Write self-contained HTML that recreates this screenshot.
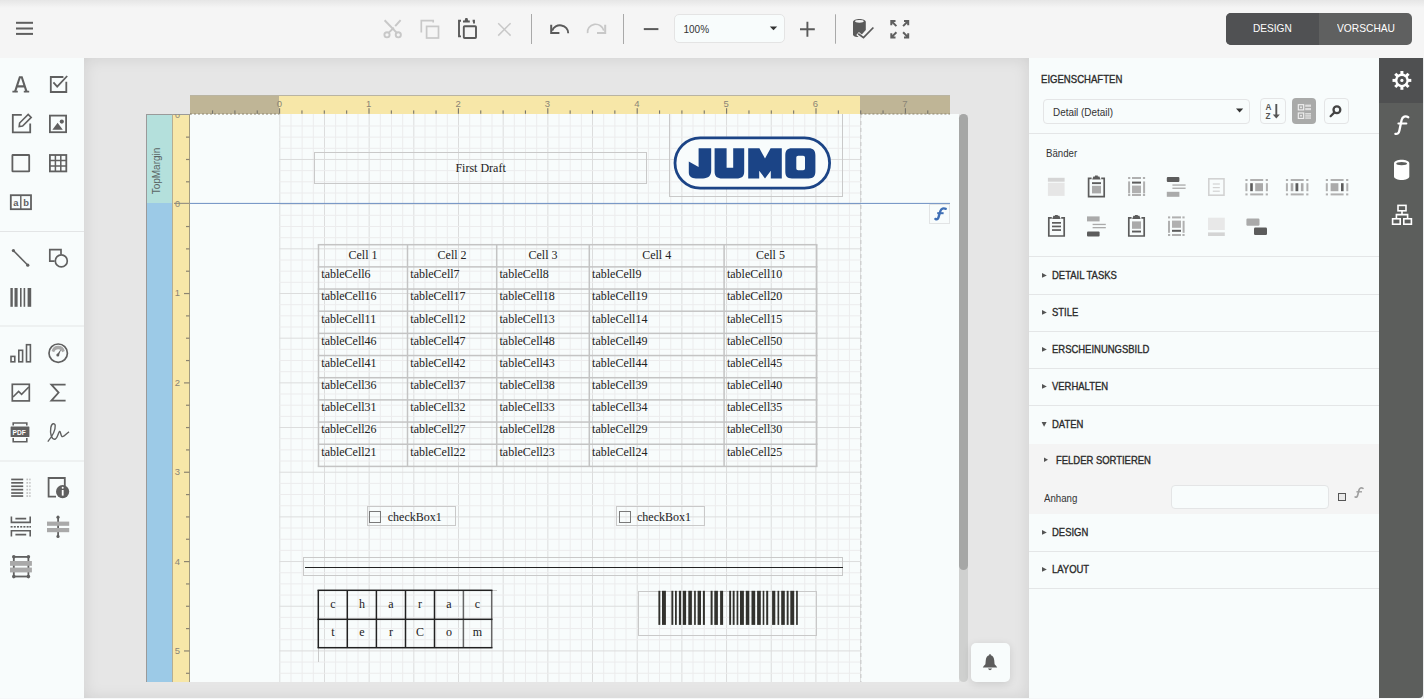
<!DOCTYPE html><html><head><meta charset="utf-8"><style>
*{margin:0;padding:0;box-sizing:border-box}
html,body{width:1424px;height:699px;overflow:hidden;background:#f5f5f5;font-family:"Liberation Sans",sans-serif}
.a{position:absolute}
.t{position:absolute;white-space:nowrap;line-height:1}
.serif{font-family:"Liberation Serif",serif}
</style></head><body>

<div class="a" style="left:0;top:0;width:1424px;height:58px;background:#f5f5f5"></div>
<div class="a" style="left:0;top:0;width:1424px;height:8px;background:linear-gradient(#e6e6e6,#f5f5f5)"></div>
<svg class="a" style="left:0;top:0" width="1424" height="58" viewBox="0 0 1424 58">
<g fill="#5f5f5f"><rect x="16" y="21.8" width="17" height="2"/><rect x="16" y="27.5" width="17" height="2"/><rect x="16" y="32.9" width="17" height="2"/></g>
<g fill="none" stroke="#c8c8c8" stroke-width="1.7">
 <circle cx="387" cy="34.8" r="2.6" stroke-width="1.9"/><circle cx="398.3" cy="34.8" r="2.6" stroke-width="1.9"/>
 <path d="M384.6,20.2 L396.6,32.6" stroke-width="2"/><path d="M400.6,20.2 L395.2,26.2 M393.8,27.8 L388.8,32.6" stroke-width="2"/>
 <path d="M421.3,32.4 V20.6 H433.2 V22.4"/><rect x="426.6" y="26.4" width="11.9" height="11.6"/>
 <path d="M498.2,23.2 L510.6,35.6 M510.6,23.2 L498.2,35.6" stroke-width="1.5"/>
 <path d="M587.6,33.2 A8.2,7.6 0 0 1 603.8,30.6" /><path d="M605.2,24.8 V33.1 H597" stroke-width="2"/>
</g>
<g fill="none" stroke="#5a5a5a" stroke-width="1.9">
 <path d="M461,20.8 H459 V36.4 H461"/><path d="M472.6,20.8 H474 V23.6"/>
 <rect x="463.8" y="26.2" width="12.2" height="11.8" rx="0.8"/>
 <path d="M568.2,33.2 A8.2,7.6 0 0 0 552.2,30.6"/><path d="M551.2,24.8 V33.1 H559.4" stroke-width="2"/>
 <path d="M643.8,29.1 H658.4" stroke-width="2"/>
 <path d="M800,29.2 H814.8 M807.4,21.8 V36.7" stroke-width="1.9"/>
</g>
<path fill="#5a5a5a" d="M463,22.6 V20.4 H464.6 L465.4,18.1 H467.4 L468.2,20.4 H469.8 V22.6 Z"/>
<g fill="#a9a9a9"><rect x="531" y="14" width="1" height="30"/><rect x="623" y="14" width="1" height="30"/><rect x="835" y="14.3" width="1" height="29.4"/></g>
<path fill="#5a5a5a" d="M853,22 C853,18 865.8,18 865.8,22 V30 L860,36.4 C857,37.6 853,36.8 853,34.5 Z"/>
<ellipse cx="859.4" cy="21.3" rx="4.4" ry="1.4" fill="#f4f4f4"/>
<path d="M857.6,33.4 L863.4,38.4 L874,27.6" fill="none" stroke="#f4f4f4" stroke-width="4"/>
<path d="M858.2,33.7 L863.5,37.6 L873.4,27.5" fill="none" stroke="#5a5a5a" stroke-width="1.7"/>
<g fill="none" stroke="#5f5f5f" stroke-width="2">
 <path d="M891.3,25.2 V21 H895.5 M891.6,21.3 L896.4,26.1"/>
 <path d="M908.2,25.2 V21 H904 M907.9,21.3 L903.1,26.1"/>
 <path d="M891.3,33.2 V37.4 H895.5 M891.6,37.1 L896.4,32.3"/>
 <path d="M908.2,33.2 V37.4 H904 M907.9,37.1 L903.1,32.3"/>
</g>
<path d="M769.8,26.4 H777.2 L773.5,30.3 Z" fill="#333"/>
</svg>
<div class="a" style="left:674px;top:14px;width:111px;height:29px;border:1px solid #e4e4e4;border-radius:5px;background:#f8fcfc"></div>
<svg class="a" style="left:0;top:0" width="1424" height="58"><path d="M769.8,26.4 H777.2 L773.5,30.3 Z" fill="#333"/></svg>
<div class="t" style="left:683.5px;top:24.6px;font-size:10px;color:#333">100%</div>
<div class="a" style="left:1226px;top:13px;width:186px;height:32px;border-radius:5px;overflow:hidden;background:#5f6060"><div class="a" style="left:0;top:0;width:93px;height:32px;background:#505153"></div></div>
<div class="t" style="left:1253px;top:23px;font-size:11px;color:#fff;transform:scaleX(0.92);transform-origin:left">DESIGN</div>
<div class="t" style="left:1336.5px;top:23px;font-size:11px;color:#fff;transform:scaleX(0.93);transform-origin:left">VORSCHAU</div>
<div class="a" style="left:0;top:58px;width:84px;height:641px;background:#f8fcfc"></div>
<svg class="a" style="left:0;top:0" width="84" height="699" viewBox="0 0 84 699">
<g fill="#e3e5e6"><rect x="0" y="231" width="84" height="1"/><rect x="0" y="325.5" width="84" height="1"/><rect x="0" y="460.5" width="84" height="1"/></g>
<g fill="none" stroke="#606060" stroke-width="1.8">
 <!-- A serif -->
 <path d="M15,91.8 L19.8,77.2 H21.8 L26.6,91.8 M16.8,86.4 H24.8" stroke-width="2.1"/>
 <path d="M12.4,91.6 H17.8 M23.8,91.6 H29.2" stroke-width="1.8"/>
 <!-- checkbox -->
 <path d="M63.4,77 H50.8 V92 H66.3 V81.8"/>
 <path d="M53.4,82.4 L57.2,86.6 L67.2,76" />
 <!-- edit -->
 <path d="M21.8,114.8 H12.8 V132.4 H30.2 V123.4"/>
 <path d="M19.2,126.6 L19.6,123 L28.2,114.4 L31.2,117.4 L22.6,126 Z" stroke-width="1.6"/>
 <!-- image -->
 <rect x="49.9" y="115.6" width="16.2" height="16.6"/>
 <!-- rect -->
 <rect x="12.4" y="155" width="16.8" height="16.4" rx="0.5"/>
 <!-- table -->
 <rect x="49.9" y="155" width="16.4" height="16.4"/>
 <path d="M55.4,155 V171.4 M60.8,155 V171.4 M49.9,160.5 H66.3 M49.9,165.9 H66.3" stroke-width="1.5"/>
 <!-- ab -->
 <rect x="10.8" y="195.2" width="20.2" height="14"/><path d="M20.8,195.2 V209.2" stroke-width="1.4"/>
 <!-- line -->
 <path d="M13.6,250.8 L27.6,265" stroke-width="1.6"/>
 <!-- shape -->
 <path d="M54.6,261.2 H49.8 V249.6 H61 V254.4" stroke-width="1.7"/>
 <circle cx="61.3" cy="260.9" r="6" stroke-width="1.7"/>
 <!-- chart bars -->
 <rect x="11" y="356.4" width="3.8" height="5.4" stroke-width="1.6"/>
 <rect x="18.8" y="350.3" width="3.8" height="11.5" stroke-width="1.6"/>
 <rect x="26.5" y="344.7" width="3.9" height="17.1" stroke-width="1.6"/>
 <!-- gauge -->
 <circle cx="58.2" cy="353.2" r="9.2" stroke-width="1.7"/>
 <!-- line chart -->
 <rect x="12.3" y="384.3" width="17" height="16.6" stroke-width="1.7"/>
 <path d="M13,397 L18.6,391.4 L21.6,394.4 L28.8,387" stroke-width="1.6"/>
 <!-- sigma -->
 <path d="M65.6,384.6 H51.4 L58.6,392.6 L51.4,400.6 H65.6" stroke-width="1.8"/>
 <!-- signature -->
 <path d="M47.8,441.6 C51.6,437 55.6,431 55.2,425.6 C54.8,422.6 51.6,423 50.8,427.6 C50,432.8 51.2,439 54.4,439.2 C57.6,439.4 58.2,432 59.6,431.4 C60.8,431 60.6,437 62.6,436.6 C64.6,436.2 66.6,433.4 69,431.8" stroke-width="1.4"/>
 <!-- info page -->
 <path d="M56,496.6 H48.6 V478 H64.8 V486" stroke-width="1.8"/>
 <!-- page break -->
 <path d="M11.4,516.6 V522.4 H30.2 V516.6 M15.4,518.6 H26.2" stroke-width="1.6"/>
 <path d="M11.4,536.6 V530.8 H30.2 V536.6 M15.4,534.6 H26.2" stroke-width="1.6"/>
</g>
<g fill="#606060">
 <circle cx="13.4" cy="250.6" r="1.6"/><circle cx="27.8" cy="265.2" r="1.6"/>
 <circle cx="61.8" cy="121.6" r="2.1"/>
 <path d="M52.4,129.8 L57.6,122.8 L62.8,129.8 Z"/>
 <path d="M22.6,113.6 L24.6,111.6 L27.2,114.2 L25.2,116.2 Z" fill="none"/>
 <rect x="10.4" y="288" width="2.4" height="18.8"/><rect x="14.5" y="288" width="3.1" height="18.8"/><rect x="20" y="288" width="1.6" height="18.8"/><rect x="23.6" y="288" width="1.6" height="18.8"/><rect x="27.6" y="288" width="3.6" height="18.8"/>
 <path d="M12.4,192 Z"/>
 <!-- pdf -->
 <rect x="10.6" y="426.6" width="18.8" height="10.4" rx="0.5"/>
 <path d="M12.4,425.6 V422.2 H27.6 V425.6 H26 V423.8 H14 V425.6 Z M12.4,438 V442.6 H27.6 V438 H26 V441 H14 V438 Z"/>
 <!-- gauge needle -->
 <path d="M57,354.6 L61.6,348.2 L58.8,355.6 Z"/>
 <circle cx="57.8" cy="355" r="1.5"/>
 <!-- toc -->
 <rect x="11.2" y="478.6" width="12" height="1.7"/><rect x="11.2" y="482" width="12" height="1.7"/><rect x="11.2" y="485.4" width="12" height="1.7"/><rect x="11.2" y="488.8" width="12" height="1.7"/><rect x="11.2" y="492.2" width="12" height="1.7"/><rect x="11.2" y="495.2" width="12" height="1.7"/>
 <!-- info circle -->
 <circle cx="62.6" cy="491.6" r="6.6"/>
 <!-- page break dots -->
 <rect x="10.6" y="526" width="2" height="1.6"/><rect x="13.8" y="526" width="2" height="1.6"/><rect x="17" y="526" width="2" height="1.6"/><rect x="20.2" y="526" width="2" height="1.6"/><rect x="23.4" y="526" width="2" height="1.6"/><rect x="26.6" y="526" width="2" height="1.6"/><rect x="29.4" y="526" width="1.6" height="1.6"/>
 <!-- cross band vertical -->
 <rect x="57.2" y="516" width="1.8" height="21"/><circle cx="58" cy="517.2" r="1.6"/><circle cx="58" cy="536.4" r="1.6"/>
 <!-- crosstab -->
 <rect x="13.6" y="556" width="15" height="1.8"/><rect x="13.6" y="575.6" width="15" height="1.8"/>
 <rect x="12.9" y="556" width="1.8" height="21"/><rect x="27.5" y="556" width="1.8" height="21"/>
 <circle cx="13.8" cy="556.8" r="1.8"/><circle cx="28.4" cy="556.8" r="1.8"/><circle cx="13.8" cy="576.6" r="1.8"/><circle cx="28.4" cy="576.6" r="1.8"/>
</g>
<g fill="#a9a9a9">
 <path d="M51.6,351 A6.8,6.8 0 0 1 64.8,351 L62.2,352.2 A4.2,4.2 0 0 0 54.2,352.2 Z"/>
 <rect x="47" y="521.6" width="22.2" height="4.2"/><rect x="47" y="528" width="22.2" height="4.2"/>
 <rect x="10" y="561" width="21.9" height="4.8"/><rect x="10" y="567.6" width="21.9" height="4.8"/>
</g>
<g fill="#c0c0c0">
 <rect x="26.4" y="478.6" width="1.7" height="1.7"/><rect x="29.2" y="478.6" width="1.4" height="1.7"/>
 <rect x="26.4" y="482" width="1.7" height="1.7"/><rect x="29.2" y="482" width="1.4" height="1.7"/>
 <rect x="26.4" y="485.4" width="1.7" height="1.7"/><rect x="29.2" y="485.4" width="1.4" height="1.7"/>
 <rect x="26.4" y="488.8" width="1.7" height="1.7"/><rect x="29.2" y="488.8" width="1.4" height="1.7"/>
 <rect x="26.4" y="492.2" width="1.7" height="1.7"/><rect x="29.2" y="492.2" width="1.4" height="1.7"/>
 <rect x="26.4" y="495.2" width="1.7" height="1.7"/><rect x="29.2" y="495.2" width="1.4" height="1.7"/>
</g>
<g fill="#fff"><rect x="61.8" y="490" width="1.8" height="5.6"/><circle cx="62.7" cy="487.8" r="1"/></g>
<text x="15.8" y="205.8" font-family="Liberation Sans" font-weight="bold" font-size="9.4" fill="#606060" text-anchor="middle">a</text>
<text x="26" y="205.8" font-family="Liberation Sans" font-weight="bold" font-size="9.4" fill="#606060" text-anchor="middle">b</text>
<text x="12.6" y="435.2" font-family="Liberation Sans" font-weight="bold" font-size="6.6" fill="#fff">PDF</text>
</svg>
<div class="a" style="left:84px;top:58px;width:945px;height:641px;background:#e6e6e6;overflow:hidden">
<div class="a" style="left:0;top:0;width:945px;height:641px;box-shadow:inset 0 0 16px rgba(0,0,0,0.10)"></div>
</div>
<div class="a" style="left:190px;top:114px;width:769px;height:568px;background:#f8fcfc"></div>
<svg class="a" style="left:0;top:0" width="1424" height="699" viewBox="0 0 1424 699"><rect x="279.30" y="114" width="1" height="568.0" fill="#dcdddd"/><rect x="290.47" y="114" width="1" height="568.0" fill="#ececed"/><rect x="301.64" y="114" width="1" height="568.0" fill="#ececed"/><rect x="312.81" y="114" width="1" height="568.0" fill="#ececed"/><rect x="323.98" y="114" width="1" height="568.0" fill="#dcdddd"/><rect x="335.14" y="114" width="1" height="568.0" fill="#ececed"/><rect x="346.31" y="114" width="1" height="568.0" fill="#ececed"/><rect x="357.48" y="114" width="1" height="568.0" fill="#ececed"/><rect x="368.65" y="114" width="1" height="568.0" fill="#dcdddd"/><rect x="379.82" y="114" width="1" height="568.0" fill="#ececed"/><rect x="390.99" y="114" width="1" height="568.0" fill="#ececed"/><rect x="402.16" y="114" width="1" height="568.0" fill="#ececed"/><rect x="413.32" y="114" width="1" height="568.0" fill="#dcdddd"/><rect x="424.49" y="114" width="1" height="568.0" fill="#ececed"/><rect x="435.66" y="114" width="1" height="568.0" fill="#ececed"/><rect x="446.83" y="114" width="1" height="568.0" fill="#ececed"/><rect x="458.00" y="114" width="1" height="568.0" fill="#dcdddd"/><rect x="469.17" y="114" width="1" height="568.0" fill="#ececed"/><rect x="480.34" y="114" width="1" height="568.0" fill="#ececed"/><rect x="491.51" y="114" width="1" height="568.0" fill="#ececed"/><rect x="502.68" y="114" width="1" height="568.0" fill="#dcdddd"/><rect x="513.84" y="114" width="1" height="568.0" fill="#ececed"/><rect x="525.01" y="114" width="1" height="568.0" fill="#ececed"/><rect x="536.18" y="114" width="1" height="568.0" fill="#ececed"/><rect x="547.35" y="114" width="1" height="568.0" fill="#dcdddd"/><rect x="558.52" y="114" width="1" height="568.0" fill="#ececed"/><rect x="569.69" y="114" width="1" height="568.0" fill="#ececed"/><rect x="580.86" y="114" width="1" height="568.0" fill="#ececed"/><rect x="592.02" y="114" width="1" height="568.0" fill="#dcdddd"/><rect x="603.19" y="114" width="1" height="568.0" fill="#ececed"/><rect x="614.36" y="114" width="1" height="568.0" fill="#ececed"/><rect x="625.53" y="114" width="1" height="568.0" fill="#ececed"/><rect x="636.70" y="114" width="1" height="568.0" fill="#dcdddd"/><rect x="647.87" y="114" width="1" height="568.0" fill="#ececed"/><rect x="659.04" y="114" width="1" height="568.0" fill="#ececed"/><rect x="670.21" y="114" width="1" height="568.0" fill="#ececed"/><rect x="681.38" y="114" width="1" height="568.0" fill="#dcdddd"/><rect x="692.54" y="114" width="1" height="568.0" fill="#ececed"/><rect x="703.71" y="114" width="1" height="568.0" fill="#ececed"/><rect x="714.88" y="114" width="1" height="568.0" fill="#ececed"/><rect x="726.05" y="114" width="1" height="568.0" fill="#dcdddd"/><rect x="737.22" y="114" width="1" height="568.0" fill="#ececed"/><rect x="748.39" y="114" width="1" height="568.0" fill="#ececed"/><rect x="759.56" y="114" width="1" height="568.0" fill="#ececed"/><rect x="770.72" y="114" width="1" height="568.0" fill="#dcdddd"/><rect x="781.89" y="114" width="1" height="568.0" fill="#ececed"/><rect x="793.06" y="114" width="1" height="568.0" fill="#ececed"/><rect x="804.23" y="114" width="1" height="568.0" fill="#ececed"/><rect x="815.40" y="114" width="1" height="568.0" fill="#dcdddd"/><rect x="826.57" y="114" width="1" height="568.0" fill="#ececed"/><rect x="837.74" y="114" width="1" height="568.0" fill="#ececed"/><rect x="848.91" y="114" width="1" height="568.0" fill="#ececed"/><rect x="860.08" y="114" width="1" height="568.0" fill="#dcdddd"/><rect x="279.30" y="125.47" width="581.1" height="1" fill="#ececed"/><rect x="279.30" y="136.64" width="581.1" height="1" fill="#ececed"/><rect x="279.30" y="147.81" width="581.1" height="1" fill="#ececed"/><rect x="279.30" y="158.97" width="581.1" height="1" fill="#dcdddd"/><rect x="279.30" y="170.14" width="581.1" height="1" fill="#ececed"/><rect x="279.30" y="181.31" width="581.1" height="1" fill="#ececed"/><rect x="279.30" y="192.48" width="581.1" height="1" fill="#ececed"/><rect x="279.30" y="203.65" width="581.1" height="1" fill="#dcdddd"/><rect x="279.30" y="214.82" width="581.1" height="1" fill="#ececed"/><rect x="279.30" y="225.99" width="581.1" height="1" fill="#ececed"/><rect x="279.30" y="237.16" width="581.1" height="1" fill="#ececed"/><rect x="279.30" y="248.32" width="581.1" height="1" fill="#dcdddd"/><rect x="279.30" y="259.49" width="581.1" height="1" fill="#ececed"/><rect x="279.30" y="270.66" width="581.1" height="1" fill="#ececed"/><rect x="279.30" y="281.83" width="581.1" height="1" fill="#ececed"/><rect x="279.30" y="293.00" width="581.1" height="1" fill="#dcdddd"/><rect x="279.30" y="304.17" width="581.1" height="1" fill="#ececed"/><rect x="279.30" y="315.34" width="581.1" height="1" fill="#ececed"/><rect x="279.30" y="326.51" width="581.1" height="1" fill="#ececed"/><rect x="279.30" y="337.68" width="581.1" height="1" fill="#dcdddd"/><rect x="279.30" y="348.84" width="581.1" height="1" fill="#ececed"/><rect x="279.30" y="360.01" width="581.1" height="1" fill="#ececed"/><rect x="279.30" y="371.18" width="581.1" height="1" fill="#ececed"/><rect x="279.30" y="382.35" width="581.1" height="1" fill="#dcdddd"/><rect x="279.30" y="393.52" width="581.1" height="1" fill="#ececed"/><rect x="279.30" y="404.69" width="581.1" height="1" fill="#ececed"/><rect x="279.30" y="415.86" width="581.1" height="1" fill="#ececed"/><rect x="279.30" y="427.02" width="581.1" height="1" fill="#dcdddd"/><rect x="279.30" y="438.19" width="581.1" height="1" fill="#ececed"/><rect x="279.30" y="449.36" width="581.1" height="1" fill="#ececed"/><rect x="279.30" y="460.53" width="581.1" height="1" fill="#ececed"/><rect x="279.30" y="471.70" width="581.1" height="1" fill="#dcdddd"/><rect x="279.30" y="482.87" width="581.1" height="1" fill="#ececed"/><rect x="279.30" y="494.04" width="581.1" height="1" fill="#ececed"/><rect x="279.30" y="505.21" width="581.1" height="1" fill="#ececed"/><rect x="279.30" y="516.38" width="581.1" height="1" fill="#dcdddd"/><rect x="279.30" y="527.54" width="581.1" height="1" fill="#ececed"/><rect x="279.30" y="538.71" width="581.1" height="1" fill="#ececed"/><rect x="279.30" y="549.88" width="581.1" height="1" fill="#ececed"/><rect x="279.30" y="561.05" width="581.1" height="1" fill="#dcdddd"/><rect x="279.30" y="572.22" width="581.1" height="1" fill="#ececed"/><rect x="279.30" y="583.39" width="581.1" height="1" fill="#ececed"/><rect x="279.30" y="594.56" width="581.1" height="1" fill="#ececed"/><rect x="279.30" y="605.72" width="581.1" height="1" fill="#dcdddd"/><rect x="279.30" y="616.89" width="581.1" height="1" fill="#ececed"/><rect x="279.30" y="628.06" width="581.1" height="1" fill="#ececed"/><rect x="279.30" y="639.23" width="581.1" height="1" fill="#ececed"/><rect x="279.30" y="650.40" width="581.1" height="1" fill="#dcdddd"/><rect x="279.30" y="661.57" width="581.1" height="1" fill="#ececed"/><rect x="279.30" y="672.74" width="581.1" height="1" fill="#ececed"/>
<line x1="860.9" y1="114" x2="860.9" y2="682" stroke="#c8c8c8" stroke-width="1" stroke-dasharray="4,3"/>
<rect x="190" y="202.9" width="760" height="1" fill="#6d8fc2"/>
</svg>
<div class="a" style="left:190px;top:95px;width:760px;height:19px;background:#bfb596;border-top:1px solid #b9b4a2"></div>
<div class="a" style="left:279.4px;top:96px;width:581px;height:18px;background:#f7e7a8"></div>
<svg class="a" style="left:0;top:0" width="1424" height="699" viewBox="0 0 1424 699"><rect x="212.00" y="110.4" width="1.1" height="3.4" fill="#77756c"/><rect x="234.35" y="110.4" width="1.1" height="3.4" fill="#77756c"/><rect x="256.70" y="110.4" width="1.1" height="3.4" fill="#77756c"/><rect x="279.05" y="108.2" width="1.1" height="5.6" fill="#77756c"/><rect x="301.40" y="110.4" width="1.1" height="3.4" fill="#77756c"/><rect x="323.75" y="110.4" width="1.1" height="3.4" fill="#77756c"/><rect x="346.10" y="110.4" width="1.1" height="3.4" fill="#77756c"/><rect x="368.45" y="108.2" width="1.1" height="5.6" fill="#77756c"/><rect x="390.80" y="110.4" width="1.1" height="3.4" fill="#77756c"/><rect x="413.15" y="110.4" width="1.1" height="3.4" fill="#77756c"/><rect x="435.50" y="110.4" width="1.1" height="3.4" fill="#77756c"/><rect x="457.85" y="108.2" width="1.1" height="5.6" fill="#77756c"/><rect x="480.20" y="110.4" width="1.1" height="3.4" fill="#77756c"/><rect x="502.55" y="110.4" width="1.1" height="3.4" fill="#77756c"/><rect x="524.90" y="110.4" width="1.1" height="3.4" fill="#77756c"/><rect x="547.25" y="108.2" width="1.1" height="5.6" fill="#77756c"/><rect x="569.60" y="110.4" width="1.1" height="3.4" fill="#77756c"/><rect x="591.95" y="110.4" width="1.1" height="3.4" fill="#77756c"/><rect x="614.30" y="110.4" width="1.1" height="3.4" fill="#77756c"/><rect x="636.65" y="108.2" width="1.1" height="5.6" fill="#77756c"/><rect x="659.00" y="110.4" width="1.1" height="3.4" fill="#77756c"/><rect x="681.35" y="110.4" width="1.1" height="3.4" fill="#77756c"/><rect x="703.70" y="110.4" width="1.1" height="3.4" fill="#77756c"/><rect x="726.05" y="108.2" width="1.1" height="5.6" fill="#77756c"/><rect x="748.40" y="110.4" width="1.1" height="3.4" fill="#77756c"/><rect x="770.75" y="110.4" width="1.1" height="3.4" fill="#77756c"/><rect x="793.10" y="110.4" width="1.1" height="3.4" fill="#77756c"/><rect x="815.45" y="108.2" width="1.1" height="5.6" fill="#77756c"/><rect x="837.80" y="110.4" width="1.1" height="3.4" fill="#77756c"/><rect x="860.15" y="110.4" width="1.1" height="3.4" fill="#77756c"/><rect x="882.50" y="110.4" width="1.1" height="3.4" fill="#77756c"/><rect x="904.85" y="108.2" width="1.1" height="5.6" fill="#77756c"/><rect x="927.20" y="110.4" width="1.1" height="3.4" fill="#77756c"/>
<line x1="190" y1="114" x2="279.4" y2="114" stroke="#8d8570" stroke-width="1.2" stroke-dasharray="2,2"/>
<line x1="860.4" y1="114" x2="950" y2="114" stroke="#8d8570" stroke-width="1.2" stroke-dasharray="2,2"/>
<rect x="190" y="113.4" width="0.8" height="1" fill="#8d8570"/>
<text x="279.40" y="107.4" font-family="Liberation Sans" font-size="9.5" fill="#8a8576" text-anchor="middle">0</text>
<text x="368.75" y="107.4" font-family="Liberation Sans" font-size="9.5" fill="#8a8576" text-anchor="middle">1</text>
<text x="458.10" y="107.4" font-family="Liberation Sans" font-size="9.5" fill="#8a8576" text-anchor="middle">2</text>
<text x="547.45" y="107.4" font-family="Liberation Sans" font-size="9.5" fill="#8a8576" text-anchor="middle">3</text>
<text x="636.80" y="107.4" font-family="Liberation Sans" font-size="9.5" fill="#8a8576" text-anchor="middle">4</text>
<text x="726.15" y="107.4" font-family="Liberation Sans" font-size="9.5" fill="#8a8576" text-anchor="middle">5</text>
<text x="815.50" y="107.4" font-family="Liberation Sans" font-size="9.5" fill="#8a8576" text-anchor="middle">6</text>
<text x="904.85" y="107.4" font-family="Liberation Sans" font-size="9.5" fill="#8a8576" text-anchor="middle">7</text>
</svg>
<div class="a" style="left:146px;top:114px;width:25.5px;height:89.4px;background:#b4e0dc;border-left:1px solid #9a9a9a;border-top:1px solid #9a9a9a"></div>
<div class="a" style="left:146px;top:203.4px;width:25.5px;height:278.6px;background:#9ccae7;border-left:1px solid #9a9a9a"></div>
<div class="a" style="left:146px;top:482px;width:25.5px;height:200px;background:#9ccae7;border-left:1px solid #9a9a9a"></div>
<div class="t" style="left:157.3px;top:171.4px;font-size:10px;color:#5a6464;transform:translate(-50%,-50%) rotate(-90deg)">TopMargin</div>
<div class="a" style="left:171.5px;top:114px;width:18.5px;height:568px;background:#f7e7a8;border-top:1px solid #9a9a9a;border-right:1.2px solid #a39c80;border-left:1px solid #b5ae92"></div>
<svg class="a" style="left:0;top:0" width="1424" height="699" viewBox="0 0 1424 699"><rect x="186" y="136.54" width="3.6" height="1.2" fill="#8d8570"/><rect x="186" y="158.88" width="3.6" height="1.2" fill="#8d8570"/><rect x="186" y="181.21" width="3.6" height="1.2" fill="#8d8570"/><rect x="186" y="225.94" width="3.6" height="1.2" fill="#8d8570"/><rect x="186" y="248.28" width="3.6" height="1.2" fill="#8d8570"/><rect x="186" y="270.61" width="3.6" height="1.2" fill="#8d8570"/><rect x="184" y="292.95" width="5.6" height="1.2" fill="#8d8570"/><rect x="186" y="315.29" width="3.6" height="1.2" fill="#8d8570"/><rect x="186" y="337.62" width="3.6" height="1.2" fill="#8d8570"/><rect x="186" y="359.96" width="3.6" height="1.2" fill="#8d8570"/><rect x="184" y="382.30" width="5.6" height="1.2" fill="#8d8570"/><rect x="186" y="404.64" width="3.6" height="1.2" fill="#8d8570"/><rect x="186" y="426.97" width="3.6" height="1.2" fill="#8d8570"/><rect x="186" y="449.31" width="3.6" height="1.2" fill="#8d8570"/><rect x="184" y="471.65" width="5.6" height="1.2" fill="#8d8570"/><rect x="186" y="493.99" width="3.6" height="1.2" fill="#8d8570"/><rect x="186" y="516.32" width="3.6" height="1.2" fill="#8d8570"/><rect x="186" y="538.66" width="3.6" height="1.2" fill="#8d8570"/><rect x="184" y="561.00" width="5.6" height="1.2" fill="#8d8570"/><rect x="186" y="583.34" width="3.6" height="1.2" fill="#8d8570"/><rect x="186" y="605.67" width="3.6" height="1.2" fill="#8d8570"/><rect x="186" y="628.01" width="3.6" height="1.2" fill="#8d8570"/><rect x="184" y="650.35" width="5.6" height="1.2" fill="#8d8570"/><rect x="186" y="672.69" width="3.6" height="1.2" fill="#8d8570"/>
<clipPath id="vr0"><rect x="172" y="114.6" width="17" height="10"/></clipPath><text x="177.4" y="117.8" font-family="Liberation Sans" font-size="9" fill="#8a8576" text-anchor="middle" clip-path="url(#vr0)">0</text>
<rect x="174" y="202.8" width="15.5" height="1.2" fill="#9a9484"/>
<text x="177.4" y="207" font-family="Liberation Sans" font-size="9" fill="#8a8576" text-anchor="middle">0</text>
<text x="177.4" y="296.45" font-family="Liberation Sans" font-size="9.5" fill="#8a8576" text-anchor="middle">1</text>
<text x="177.4" y="385.80" font-family="Liberation Sans" font-size="9.5" fill="#8a8576" text-anchor="middle">2</text>
<text x="177.4" y="475.15" font-family="Liberation Sans" font-size="9.5" fill="#8a8576" text-anchor="middle">3</text>
<text x="177.4" y="564.50" font-family="Liberation Sans" font-size="9.5" fill="#8a8576" text-anchor="middle">4</text>
<text x="177.4" y="653.85" font-family="Liberation Sans" font-size="9.5" fill="#8a8576" text-anchor="middle">5</text>
</svg>
<div class="a" style="left:959.2px;top:114px;width:9px;height:568px;background:#cfd0cf;border-radius:4.5px"></div>
<div class="a" style="left:959.2px;top:114px;width:9px;height:456px;background:#a6a7a6;border-radius:4.5px"></div>
<div class="a" style="left:971px;top:643.2px;width:39px;height:38.8px;background:#f8fcfc;border-radius:5px;box-shadow:0 2px 8px rgba(0,0,0,0.12)"></div>
<svg class="a" style="left:0;top:0" width="1424" height="699" viewBox="0 0 1424 699"><path fill="#5c5c5c" d="M982.8,667.6 Q983.4,665.8 985.4,664.2 L985.8,660 C986,657.2 987.4,655.8 989.2,655.2 V654.6 Q990,653.4 990.8,654.6 V655.2 C992.6,655.8 994,657.2 994.2,660 L994.6,664.2 Q996.6,665.8 997.2,667.6 Z"/><path fill="#5c5c5c" d="M987.9,668.6 H992.1 Q990,672 987.9,668.6 Z"/></svg>
<div class="a" style="left:84px;top:697.6px;width:945px;height:1.4px;background:#f4f6f7"></div>
<div class="a" style="left:314px;top:152px;width:332.6px;height:31.7px;border:1px solid #c9c9c9"></div>
<div class="t serif" style="left:455.4px;top:162.1px;font-size:12px;color:#222">First Draft</div>
<div class="a" style="left:668.6px;top:114.4px;width:174px;height:83px;border:1px solid #c9c9c9;border-top:none"></div>
<svg class="a" style="left:0;top:0" width="1424" height="699" viewBox="0 0 1424 699">
<rect x="675" y="137.8" width="154.6" height="50.4" rx="25.2" fill="#f8fcfc" stroke="#1b4486" stroke-width="2.8"/>
<g fill="#1b4486" transform="translate(670,132)">
 <path d="M29,16.2 H41.2 V38.6 C41.2,44 38.4,46.4 33,46.4 H26 C21.4,46.4 18.8,44.4 18.8,40.6 V29.6 L28.6,35 V16.2 Z"/>
 <path d="M44.6,16.2 H56.6 V35.8 H63.2 V16.2 H74.2 V39.4 C74.2,44.4 71.6,46.4 66.4,46.4 H52.4 C47.2,46.4 44.6,44.4 44.6,39.4 Z"/>
 <path d="M78.2,16.2 H89.4 L95,26.6 L100.6,16.2 H111.8 V46.4 H100.8 V38.8 L95,46.4 L89.2,38.8 V46.4 H78.2 Z"/>
 <path d="M122,16.2 H138.6 C143.4,16.2 145.4,18.6 145.4,23.4 V39.2 C145.4,44 143.4,46.4 138.6,46.4 H122 C117.2,46.4 115.3,44 115.3,39.2 V23.4 C115.3,18.6 117.2,16.2 122,16.2 Z M128.2,23.8 C127,23.8 126.3,24.6 126.3,25.8 V36.2 C126.3,37.4 127,38.2 128.2,38.2 H133.1 C134.3,38.2 135,37.4 135,36.2 V25.8 C135,24.6 134.3,23.8 133.1,23.8 Z" fill-rule="evenodd"/>
</g>
</svg>
<div class="a" style="left:929.2px;top:203.9px;width:20.5px;height:20.2px;border:1px solid #e2e4e5;background:#f8fcfc"></div>
<svg class="a" style="left:0;top:0" width="1424" height="699" viewBox="0 0 1424 699"><path d="M945.8,208.8 C943.6,207.8 941.2,208.4 940.4,211 L938.4,217.6 C937.9,219.2 936.6,219.6 935.4,218.9" fill="none" stroke="#3f6fb5" stroke-width="2.4" stroke-linecap="round"/><path d="M937.2,213.2 H943.6" stroke="#3f6fb5" stroke-width="2"/></svg>
<svg class="a" style="left:0;top:0" width="1424" height="699" viewBox="0 0 1424 699"><rect x="317.75" y="244.70" width="1.5" height="221.70" fill="#c4c4c4"/><rect x="406.75" y="244.70" width="1.5" height="221.70" fill="#c4c4c4"/><rect x="495.95" y="244.70" width="1.5" height="221.70" fill="#c4c4c4"/><rect x="588.55" y="244.70" width="1.5" height="221.70" fill="#c4c4c4"/><rect x="723.35" y="244.70" width="1.5" height="221.70" fill="#c4c4c4"/><rect x="815.95" y="244.70" width="1.5" height="221.70" fill="#c4c4c4"/><rect x="317.75" y="243.95" width="499.70" height="1.5" fill="#c4c4c4"/><rect x="317.75" y="266.12" width="499.70" height="1.5" fill="#c4c4c4"/><rect x="317.75" y="288.29" width="499.70" height="1.5" fill="#c4c4c4"/><rect x="317.75" y="310.46" width="499.70" height="1.5" fill="#c4c4c4"/><rect x="317.75" y="332.63" width="499.70" height="1.5" fill="#c4c4c4"/><rect x="317.75" y="354.80" width="499.70" height="1.5" fill="#c4c4c4"/><rect x="317.75" y="376.97" width="499.70" height="1.5" fill="#c4c4c4"/><rect x="317.75" y="399.14" width="499.70" height="1.5" fill="#c4c4c4"/><rect x="317.75" y="421.31" width="499.70" height="1.5" fill="#c4c4c4"/><rect x="317.75" y="443.48" width="499.70" height="1.5" fill="#c4c4c4"/><rect x="317.75" y="465.65" width="499.70" height="1.5" fill="#c4c4c4"/></svg>
<div class="t serif" style="left:363.0px;top:248.7px;font-size:12px;color:#222;transform:translateX(-50%)">Cell 1</div>
<div class="t serif" style="left:452.1px;top:248.7px;font-size:12px;color:#222;transform:translateX(-50%)">Cell 2</div>
<div class="t serif" style="left:543.0px;top:248.7px;font-size:12px;color:#222;transform:translateX(-50%)">Cell 3</div>
<div class="t serif" style="left:656.7px;top:248.7px;font-size:12px;color:#222;transform:translateX(-50%)">Cell 4</div>
<div class="t serif" style="left:770.4px;top:248.7px;font-size:12px;color:#222;transform:translateX(-50%)">Cell 5</div>
<div class="t serif" style="left:321.3px;top:268.2px;font-size:12px;color:#222">tableCell6</div>
<div class="t serif" style="left:410.3px;top:268.2px;font-size:12px;color:#222">tableCell7</div>
<div class="t serif" style="left:499.5px;top:268.2px;font-size:12px;color:#222">tableCell8</div>
<div class="t serif" style="left:592.1px;top:268.2px;font-size:12px;color:#222">tableCell9</div>
<div class="t serif" style="left:726.9px;top:268.2px;font-size:12px;color:#222">tableCell10</div>
<div class="t serif" style="left:321.3px;top:290.3px;font-size:12px;color:#222">tableCell16</div>
<div class="t serif" style="left:410.3px;top:290.3px;font-size:12px;color:#222">tableCell17</div>
<div class="t serif" style="left:499.5px;top:290.3px;font-size:12px;color:#222">tableCell18</div>
<div class="t serif" style="left:592.1px;top:290.3px;font-size:12px;color:#222">tableCell19</div>
<div class="t serif" style="left:726.9px;top:290.3px;font-size:12px;color:#222">tableCell20</div>
<div class="t serif" style="left:321.3px;top:312.5px;font-size:12px;color:#222">tableCell11</div>
<div class="t serif" style="left:410.3px;top:312.5px;font-size:12px;color:#222">tableCell12</div>
<div class="t serif" style="left:499.5px;top:312.5px;font-size:12px;color:#222">tableCell13</div>
<div class="t serif" style="left:592.1px;top:312.5px;font-size:12px;color:#222">tableCell14</div>
<div class="t serif" style="left:726.9px;top:312.5px;font-size:12px;color:#222">tableCell15</div>
<div class="t serif" style="left:321.3px;top:334.7px;font-size:12px;color:#222">tableCell46</div>
<div class="t serif" style="left:410.3px;top:334.7px;font-size:12px;color:#222">tableCell47</div>
<div class="t serif" style="left:499.5px;top:334.7px;font-size:12px;color:#222">tableCell48</div>
<div class="t serif" style="left:592.1px;top:334.7px;font-size:12px;color:#222">tableCell49</div>
<div class="t serif" style="left:726.9px;top:334.7px;font-size:12px;color:#222">tableCell50</div>
<div class="t serif" style="left:321.3px;top:356.9px;font-size:12px;color:#222">tableCell41</div>
<div class="t serif" style="left:410.3px;top:356.9px;font-size:12px;color:#222">tableCell42</div>
<div class="t serif" style="left:499.5px;top:356.9px;font-size:12px;color:#222">tableCell43</div>
<div class="t serif" style="left:592.1px;top:356.9px;font-size:12px;color:#222">tableCell44</div>
<div class="t serif" style="left:726.9px;top:356.9px;font-size:12px;color:#222">tableCell45</div>
<div class="t serif" style="left:321.3px;top:379.0px;font-size:12px;color:#222">tableCell36</div>
<div class="t serif" style="left:410.3px;top:379.0px;font-size:12px;color:#222">tableCell37</div>
<div class="t serif" style="left:499.5px;top:379.0px;font-size:12px;color:#222">tableCell38</div>
<div class="t serif" style="left:592.1px;top:379.0px;font-size:12px;color:#222">tableCell39</div>
<div class="t serif" style="left:726.9px;top:379.0px;font-size:12px;color:#222">tableCell40</div>
<div class="t serif" style="left:321.3px;top:401.2px;font-size:12px;color:#222">tableCell31</div>
<div class="t serif" style="left:410.3px;top:401.2px;font-size:12px;color:#222">tableCell32</div>
<div class="t serif" style="left:499.5px;top:401.2px;font-size:12px;color:#222">tableCell33</div>
<div class="t serif" style="left:592.1px;top:401.2px;font-size:12px;color:#222">tableCell34</div>
<div class="t serif" style="left:726.9px;top:401.2px;font-size:12px;color:#222">tableCell35</div>
<div class="t serif" style="left:321.3px;top:423.4px;font-size:12px;color:#222">tableCell26</div>
<div class="t serif" style="left:410.3px;top:423.4px;font-size:12px;color:#222">tableCell27</div>
<div class="t serif" style="left:499.5px;top:423.4px;font-size:12px;color:#222">tableCell28</div>
<div class="t serif" style="left:592.1px;top:423.4px;font-size:12px;color:#222">tableCell29</div>
<div class="t serif" style="left:726.9px;top:423.4px;font-size:12px;color:#222">tableCell30</div>
<div class="t serif" style="left:321.3px;top:445.5px;font-size:12px;color:#222">tableCell21</div>
<div class="t serif" style="left:410.3px;top:445.5px;font-size:12px;color:#222">tableCell22</div>
<div class="t serif" style="left:499.5px;top:445.5px;font-size:12px;color:#222">tableCell23</div>
<div class="t serif" style="left:592.1px;top:445.5px;font-size:12px;color:#222">tableCell24</div>
<div class="t serif" style="left:726.9px;top:445.5px;font-size:12px;color:#222">tableCell25</div>
<div class="a" style="left:366.8px;top:506.3px;width:88.8px;height:20.2px;border:1px solid #c9c9c9"></div>
<div class="a" style="left:369.4px;top:511.4px;width:11.3px;height:11.4px;border:1.5px solid #7a7a7a"></div>
<div class="t serif" style="left:387.8px;top:510.6px;font-size:12px;color:#222">checkBox1</div>
<div class="a" style="left:616.4px;top:506.3px;width:88.4px;height:20.2px;border:1px solid #c9c9c9"></div>
<div class="a" style="left:619.3px;top:511.4px;width:11.3px;height:11.4px;border:1.5px solid #7a7a7a"></div>
<div class="t serif" style="left:637.0px;top:510.6px;font-size:12px;color:#222">checkBox1</div>
<div class="a" style="left:303.4px;top:557.1px;width:539.4px;height:19.3px;border:1px solid #c9c9c9"></div>
<div class="a" style="left:305px;top:566.6px;width:537.5px;height:1.9px;background:#232323"></div>
<div class="a" style="left:318.3px;top:590.3px;width:178.5px;height:71.4px;border-left:1px solid #c9c9c9;border-top:1px solid #c9c9c9"></div>
<svg class="a" style="left:0;top:0" width="1424" height="699" viewBox="0 0 1424 699"><rect x="317.55" y="590.3" width="1.5" height="57.4" fill="#222"/><rect x="346.55" y="590.3" width="1.5" height="57.4" fill="#222"/><rect x="375.65" y="590.3" width="1.5" height="57.4" fill="#222"/><rect x="404.75" y="590.3" width="1.5" height="57.4" fill="#222"/><rect x="433.75" y="590.3" width="1.5" height="57.4" fill="#222"/><rect x="462.65" y="590.3" width="1.5" height="57.4" fill="#666"/><rect x="490.95" y="590.3" width="1.5" height="57.4" fill="#666"/><rect x="317.55" y="589.55" width="174.9" height="1.5" fill="#222"/><rect x="317.55" y="618.55" width="174.9" height="1.5" fill="#222"/><rect x="317.55" y="646.95" width="174.9" height="1.5" fill="#222"/></svg>
<div class="t serif" style="left:332.8px;top:598.2px;font-size:12px;color:#222;transform:translateX(-50%)">c</div>
<div class="t serif" style="left:332.8px;top:626.3px;font-size:12px;color:#222;transform:translateX(-50%)">t</div>
<div class="t serif" style="left:361.9px;top:598.2px;font-size:12px;color:#222;transform:translateX(-50%)">h</div>
<div class="t serif" style="left:361.9px;top:626.3px;font-size:12px;color:#222;transform:translateX(-50%)">e</div>
<div class="t serif" style="left:390.9px;top:598.2px;font-size:12px;color:#222;transform:translateX(-50%)">a</div>
<div class="t serif" style="left:390.9px;top:626.3px;font-size:12px;color:#222;transform:translateX(-50%)">r</div>
<div class="t serif" style="left:420.0px;top:598.2px;font-size:12px;color:#222;transform:translateX(-50%)">r</div>
<div class="t serif" style="left:420.0px;top:626.3px;font-size:12px;color:#222;transform:translateX(-50%)">C</div>
<div class="t serif" style="left:448.9px;top:598.2px;font-size:12px;color:#222;transform:translateX(-50%)">a</div>
<div class="t serif" style="left:448.9px;top:626.3px;font-size:12px;color:#222;transform:translateX(-50%)">o</div>
<div class="t serif" style="left:477.5px;top:598.2px;font-size:12px;color:#222;transform:translateX(-50%)">c</div>
<div class="t serif" style="left:477.5px;top:626.3px;font-size:12px;color:#222;transform:translateX(-50%)">m</div>
<div class="a" style="left:638.2px;top:590.5px;width:178.7px;height:45.8px;border:1px solid #c9c9c9"></div>
<svg class="a" style="left:0;top:0" width="1424" height="699" viewBox="0 0 1424 699"><rect x="658.40" y="590.8" width="1.90" height="34.1" fill="#32322e"/><rect x="662.00" y="590.8" width="3.90" height="34.1" fill="#32322e"/><rect x="671.40" y="590.8" width="1.90" height="34.1" fill="#32322e"/><rect x="675.00" y="590.8" width="1.80" height="34.1" fill="#32322e"/><rect x="678.90" y="590.8" width="2.20" height="34.1" fill="#32322e"/><rect x="682.80" y="590.8" width="3.30" height="34.1" fill="#32322e"/><rect x="688.30" y="590.8" width="3.60" height="34.1" fill="#32322e"/><rect x="694.10" y="590.8" width="1.70" height="34.1" fill="#32322e"/><rect x="697.60" y="590.8" width="3.40" height="34.1" fill="#32322e"/><rect x="702.90" y="590.8" width="2.00" height="34.1" fill="#32322e"/><rect x="710.60" y="590.8" width="2.00" height="34.1" fill="#32322e"/><rect x="714.30" y="590.8" width="3.60" height="34.1" fill="#32322e"/><rect x="720.10" y="590.8" width="3.00" height="34.1" fill="#32322e"/><rect x="729.20" y="590.8" width="1.90" height="34.1" fill="#32322e"/><rect x="732.70" y="590.8" width="1.90" height="34.1" fill="#32322e"/><rect x="736.60" y="590.8" width="1.70" height="34.1" fill="#32322e"/><rect x="740.00" y="590.8" width="3.90" height="34.1" fill="#32322e"/><rect x="745.80" y="590.8" width="3.50" height="34.1" fill="#32322e"/><rect x="751.50" y="590.8" width="3.70" height="34.1" fill="#32322e"/><rect x="757.10" y="590.8" width="3.70" height="34.1" fill="#32322e"/><rect x="762.70" y="590.8" width="1.60" height="34.1" fill="#32322e"/><rect x="766.20" y="590.8" width="2.00" height="34.1" fill="#32322e"/><rect x="772.10" y="590.8" width="3.20" height="34.1" fill="#32322e"/><rect x="777.50" y="590.8" width="1.70" height="34.1" fill="#32322e"/><rect x="781.20" y="590.8" width="3.60" height="34.1" fill="#32322e"/><rect x="786.70" y="590.8" width="1.90" height="34.1" fill="#32322e"/><rect x="790.30" y="590.8" width="3.90" height="34.1" fill="#32322e"/><rect x="796.10" y="590.8" width="1.70" height="34.1" fill="#32322e"/></svg>
<div class="a" style="left:1029px;top:58px;width:350px;height:641px;background:#f8fcfc"></div>
<div class="t" style="left:1040.7px;top:74.2px;font-size:11px;-webkit-text-stroke:0.35px #2a2a2a;color:#2a2a2a;transform:scaleX(0.87);transform-origin:left">EIGENSCHAFTEN</div>
<div class="a" style="left:1043.4px;top:98.7px;width:207px;height:25.5px;border:1px solid #e4e5e6;border-radius:4px;background:#f8fcfc"></div>
<div class="t" style="left:1053.0px;top:107.0px;font-size:11px;color:#333;transform:scaleX(0.9);transform-origin:left">Detail (Detail)</div>
<div class="a" style="left:1259.5px;top:98.2px;width:26.2px;height:26.3px;border:1px solid #e4e5e6;border-radius:4px"></div>
<div class="a" style="left:1291.6px;top:98.2px;width:24.5px;height:26.3px;background:#a9aaa9;border-radius:4px"></div>
<div class="a" style="left:1323.5px;top:98.2px;width:25.2px;height:26.3px;border:1px solid #e4e5e6;border-radius:4px"></div>
<svg class="a" style="left:0;top:0" width="1424" height="699" viewBox="0 0 1424 699">
<path d="M1236,108.6 H1243.2 L1239.6,112.6 Z" fill="#333"/>
<text x="1265.4" y="110.2" font-family="Liberation Sans" font-weight="bold" font-size="8.2" fill="#555">A</text>
<text x="1265.6" y="118.6" font-family="Liberation Sans" font-weight="bold" font-size="8.2" fill="#555">Z</text>
<path d="M1276.3,104 V116" stroke="#555" stroke-width="1.9"/><path d="M1272.8,114.6 H1279.8 L1276.3,118.6 Z" fill="#555"/>
<g fill="none" stroke="#f2f2f2" stroke-width="1.1">
 <rect x="1298.3" y="104.7" width="5.4" height="5.2"/><rect x="1298.3" y="113" width="5.4" height="5.4"/>
</g>
<g fill="#f2f2f2"><rect x="1300.2" y="106.5" width="1.6" height="1.6"/><rect x="1300.2" y="114.9" width="1.6" height="1.6"/>
<rect x="1305.2" y="113.3" width="5.8" height="1.1"/><rect x="1305.2" y="115.4" width="5.8" height="1.1"/><rect x="1305.2" y="117.5" width="5.8" height="1.1"/></g>
<rect x="1305.2" y="104.6" width="5.8" height="2.2" fill="#dedede"/><rect x="1305.2" y="108" width="5.8" height="2.2" fill="#dedede"/>
<circle cx="1336.9" cy="109.7" r="3.4" fill="none" stroke="#444" stroke-width="2.3"/>
<path d="M1334.2,112.6 L1330.6,116.2" stroke="#444" stroke-width="2.2" stroke-linecap="round"/>
</svg>
<div class="a" style="left:1029px;top:132.5px;width:350px;height:1px;background:#e4e6e7"></div>
<div class="a" style="left:1029px;top:255.5px;width:350px;height:1px;background:#e4e6e7"></div>
<div class="a" style="left:1029px;top:293.9px;width:350px;height:1px;background:#e4e6e7"></div>
<div class="a" style="left:1029px;top:330.9px;width:350px;height:1px;background:#e4e6e7"></div>
<div class="a" style="left:1029px;top:367.9px;width:350px;height:1px;background:#e4e6e7"></div>
<div class="a" style="left:1029px;top:404.7px;width:350px;height:1px;background:#e4e6e7"></div>
<div class="a" style="left:1029px;top:550.5px;width:350px;height:1px;background:#e4e6e7"></div>
<div class="a" style="left:1029px;top:588.1px;width:350px;height:1px;background:#e4e6e7"></div>
<div class="t" style="left:1045.7px;top:147.6px;font-size:11px;color:#333;transform:scaleX(0.88);transform-origin:left">Bänder</div>
<div class="a" style="left:1029px;top:443.5px;width:350px;height:70.3px;background:#f4f4f4"></div>
<div class="t" style="left:1051.8px;top:270.1px;font-size:11px;-webkit-text-stroke:0.35px #2a2a2a;color:#2a2a2a;transform:scaleX(0.86);transform-origin:left">DETAIL TASKS</div>
<div class="t" style="left:1051.8px;top:307.1px;font-size:11px;-webkit-text-stroke:0.35px #2a2a2a;color:#2a2a2a;transform:scaleX(0.86);transform-origin:left">STILE</div>
<div class="t" style="left:1051.8px;top:344.1px;font-size:11px;-webkit-text-stroke:0.35px #2a2a2a;color:#2a2a2a;transform:scaleX(0.86);transform-origin:left">ERSCHEINUNGSBILD</div>
<div class="t" style="left:1051.8px;top:381.1px;font-size:11px;-webkit-text-stroke:0.35px #2a2a2a;color:#2a2a2a;transform:scaleX(0.86);transform-origin:left">VERHALTEN</div>
<div class="t" style="left:1051.8px;top:418.8px;font-size:11px;-webkit-text-stroke:0.35px #2a2a2a;color:#2a2a2a;transform:scaleX(0.86);transform-origin:left">DATEN</div>
<div class="t" style="left:1051.8px;top:527.1px;font-size:11px;-webkit-text-stroke:0.35px #2a2a2a;color:#2a2a2a;transform:scaleX(0.86);transform-origin:left">DESIGN</div>
<div class="t" style="left:1051.8px;top:564.1px;font-size:11px;-webkit-text-stroke:0.35px #2a2a2a;color:#2a2a2a;transform:scaleX(0.86);transform-origin:left">LAYOUT</div>
<div class="t" style="left:1055.6px;top:455.1px;font-size:10.5px;-webkit-text-stroke:0.35px #2a2a2a;color:#2a2a2a;transform:scaleX(0.9);transform-origin:left">FELDER SORTIEREN</div>
<div class="t" style="left:1043.6px;top:492.6px;font-size:11px;color:#333;transform:scaleX(0.88);transform-origin:left">Anhang</div>
<svg class="a" style="left:0;top:0" width="1424" height="699" viewBox="0 0 1424 699"><path d="M1042,273.00 V277.80 L1046.8,275.40 Z" fill="#555"/><path d="M1042,310.00 V314.80 L1046.8,312.40 Z" fill="#555"/><path d="M1042,347.00 V351.80 L1046.8,349.40 Z" fill="#555"/><path d="M1042,384.00 V388.80 L1046.8,386.40 Z" fill="#555"/><path d="M1041.6,421.90 H1046.6 L1044.1,426.70 Z" fill="#555"/><path d="M1042,530.00 V534.80 L1046.8,532.40 Z" fill="#555"/><path d="M1042,567.00 V571.80 L1046.8,569.40 Z" fill="#555"/><path d="M1044,457.4 V462 L1048,459.7 Z" fill="#555"/></svg>
<div class="a" style="left:1170.5px;top:484.5px;width:158.3px;height:24px;border:1px solid #e4e5e6;border-radius:4px;background:#f8fcfc"></div>
<div class="a" style="left:1338px;top:493px;width:8px;height:8px;border:1.2px solid #555;background:#e9e9e9"></div>
<svg class="a" style="left:0;top:0" width="1424" height="699" viewBox="0 0 1424 699"><path d="M1363,488.4 C1361.4,487.4 1359.6,488 1359,490 L1357.6,495.6 C1357.2,497 1356.4,497.6 1355.2,497" fill="none" stroke="#a0a0a0" stroke-width="1.7" stroke-linecap="round"/><path d="M1356.4,491.8 H1362" stroke="#a0a0a0" stroke-width="1.4"/></svg>
<svg class="a" style="left:0;top:0" width="1424" height="699" viewBox="0 0 1424 699">
<!-- row1 -->
<rect x="1047.9" y="177.8" width="16.7" height="3.9" fill="#d5d5d5"/><rect x="1047.9" y="182.8" width="16.7" height="13.1" fill="#e6e6e6"/>
<g fill="none" stroke="#5c5c5c" stroke-width="1.7">
 <path d="M1091.6,178.4 H1088.6 V196.6 H1104.2 V178.4 H1101.2"/>
 <path d="M1051.8,217.8 H1048.8 V236 H1064.2 V217.8 H1061.2"/>
 <path d="M1131.6,217.8 H1128.8 V236 H1144.2 V217.8 H1141.4"/>
</g>
<path d="M1092.2,179.6 L1093.4,176.4 H1095 V175.6 H1097.8 V176.4 H1099.4 L1100.6,179.6 Z" fill="#5c5c5c"/>
<path d="M1052.2,219 L1053.4,215.8 H1055 V215 H1057.8 V215.8 H1059.4 L1060.6,219 Z" fill="#5c5c5c"/>
<path d="M1132.2,219 L1133.4,215.8 H1135 V215 H1137.8 V215.8 H1139.4 L1140.6,219 Z" fill="#5c5c5c"/>
<rect x="1092" y="182.2" width="9" height="1.9" fill="#5c5c5c"/><rect x="1092" y="185.8" width="9" height="7.6" fill="#aaa"/>
<g fill="#5c5c5c"><rect x="1052" y="222" width="9" height="1.7"/><rect x="1052" y="225.6" width="9" height="1.7"/><rect x="1052" y="229.2" width="9" height="1.7"/></g>
<rect x="1132" y="221.4" width="9" height="7.4" fill="#aaa"/><rect x="1132" y="230.6" width="9" height="1.9" fill="#5c5c5c"/>
<!-- dashed frames -->
<g fill="#b0b0b0">
 <rect x="1128.1" y="177" width="2.2" height="2"/><rect x="1132" y="177" width="9" height="2"/><rect x="1142.9" y="177" width="2.2" height="2"/>
 <rect x="1128.1" y="181.4" width="2" height="12"/><rect x="1143.1" y="181.4" width="2" height="12"/>
 <rect x="1128.1" y="194" width="2.2" height="2"/><rect x="1132" y="194" width="9" height="2"/><rect x="1142.9" y="194" width="2.2" height="2"/>
 <rect x="1132" y="185.6" width="9" height="7.6" />
 <rect x="1168" y="216.4" width="2.2" height="2"/><rect x="1172" y="216.4" width="9" height="2"/><rect x="1182.4" y="216.4" width="2.2" height="2"/>
 <rect x="1168" y="220.8" width="2" height="12"/><rect x="1182.6" y="220.8" width="2" height="12"/>
 <rect x="1168" y="234" width="2.2" height="2"/><rect x="1172" y="234" width="9" height="2"/><rect x="1182.4" y="234" width="2.2" height="2"/>
 <rect x="1172" y="220.6" width="9" height="7.2"/>
</g>
<rect x="1132" y="181.6" width="9" height="2" fill="#5c5c5c"/>
<rect x="1172" y="229.8" width="9" height="2" fill="#5c5c5c"/>
<!-- group header -->
<rect x="1166.8" y="177" width="12.6" height="5" rx="1" fill="#5c5c5c"/>
<rect x="1172.4" y="184.4" width="13.2" height="1.3" fill="#aaa"/><rect x="1172.4" y="187.6" width="13.2" height="1.3" fill="#aaa"/>
<rect x="1166.8" y="191.8" width="12.6" height="5" fill="#aaa"/>
<!-- group footer -->
<rect x="1087" y="216.4" width="12.6" height="5" fill="#aaa"/>
<rect x="1092.6" y="223.8" width="13.2" height="1.3" fill="#aaa"/><rect x="1092.6" y="227" width="13.2" height="1.3" fill="#aaa"/>
<rect x="1087" y="231.6" width="12.6" height="5" rx="1" fill="#5c5c5c"/>
<!-- doc light -->
<rect x="1208.8" y="178.8" width="15.2" height="16.4" fill="none" stroke="#d2d2d2" stroke-width="1.6"/>
<g fill="#d2d2d2"><rect x="1212.8" y="183.4" width="7" height="1.2"/><rect x="1212.8" y="187" width="7" height="1.2"/><rect x="1212.8" y="190.6" width="7" height="1.2"/></g>
<!-- page footer light -->
<rect x="1208" y="217.7" width="16.8" height="12.3" fill="#e8e8e8"/><rect x="1208" y="232.4" width="16.8" height="3.6" fill="#d4d4d4"/>
<!-- subreport -->
<rect x="1246.4" y="218.6" width="13.1" height="7.1" rx="1.2" fill="#aaa"/>
<rect x="1254" y="227.6" width="13" height="7.3" rx="1.2" fill="#5c5c5c"/>
<g fill="#b0b0b0"><rect x="1245.4" y="179" width="2.2" height="2"/><rect x="1250.2" y="179" width="13" height="2"/><rect x="1265.7" y="179" width="2.2" height="2"/><rect x="1245.4" y="193.4" width="2.2" height="2"/><rect x="1250.2" y="193.4" width="13" height="2"/><rect x="1265.7" y="193.4" width="2.2" height="2"/><rect x="1245.4" y="183.2" width="2" height="8"/><rect x="1265.9" y="183.2" width="2" height="8"/></g><rect x="1250.2" y="183.2" width="2.6" height="8" fill="#5c5c5c"/><rect x="1255.2" y="183.2" width="7.8" height="8" fill="#aaa"/><g fill="#b0b0b0"><rect x="1285.9" y="179" width="2.2" height="2"/><rect x="1290.7" y="179" width="13" height="2"/><rect x="1306.2" y="179" width="2.2" height="2"/><rect x="1285.9" y="193.4" width="2.2" height="2"/><rect x="1290.7" y="193.4" width="13" height="2"/><rect x="1306.2" y="193.4" width="2.2" height="2"/><rect x="1285.9" y="183.2" width="2" height="8"/><rect x="1306.4" y="183.2" width="2" height="8"/></g><rect x="1290.7" y="183.2" width="2.6" height="8" fill="#aaa"/><rect x="1295.5" y="183.2" width="2.8" height="8" fill="#5c5c5c"/><rect x="1300.9" y="183.2" width="2.6" height="8" fill="#aaa"/><g fill="#b0b0b0"><rect x="1325.8" y="179" width="2.2" height="2"/><rect x="1330.6" y="179" width="13" height="2"/><rect x="1346.1" y="179" width="2.2" height="2"/><rect x="1325.8" y="193.4" width="2.2" height="2"/><rect x="1330.6" y="193.4" width="13" height="2"/><rect x="1346.1" y="193.4" width="2.2" height="2"/><rect x="1325.8" y="183.2" width="2" height="8"/><rect x="1346.3" y="183.2" width="2" height="8"/></g><rect x="1330.6" y="183.2" width="7.8" height="8" fill="#aaa"/><rect x="1341.0" y="183.2" width="2.6" height="8" fill="#5c5c5c"/></svg>
<div class="a" style="left:1379px;top:58px;width:44px;height:639.6px;background:#5c5e5c;border-bottom-right-radius:4px"></div>
<div class="a" style="left:1379px;top:58px;width:44px;height:44.8px;background:#4f5051"></div>
<div class="a" style="left:1423px;top:58px;width:1px;height:641px;background:#e8eaeb"></div>
<svg class="a" style="left:0;top:0" width="1424" height="699" viewBox="0 0 1424 699"><rect x="1400.40" y="71.00" width="3" height="4" fill="#fff" transform="rotate(0.0 1401.90 80.40)"/><rect x="1400.40" y="71.00" width="3" height="4" fill="#fff" transform="rotate(45.0 1401.90 80.40)"/><rect x="1400.40" y="71.00" width="3" height="4" fill="#fff" transform="rotate(90.0 1401.90 80.40)"/><rect x="1400.40" y="71.00" width="3" height="4" fill="#fff" transform="rotate(135.0 1401.90 80.40)"/><rect x="1400.40" y="71.00" width="3" height="4" fill="#fff" transform="rotate(180.0 1401.90 80.40)"/><rect x="1400.40" y="71.00" width="3" height="4" fill="#fff" transform="rotate(225.0 1401.90 80.40)"/><rect x="1400.40" y="71.00" width="3" height="4" fill="#fff" transform="rotate(270.0 1401.90 80.40)"/><rect x="1400.40" y="71.00" width="3" height="4" fill="#fff" transform="rotate(315.0 1401.90 80.40)"/><circle cx="1401.90" cy="80.40" r="6.8" fill="#fff"/><circle cx="1401.90" cy="80.40" r="4.5" fill="#4f5051"/><circle cx="1401.90" cy="80.40" r="1.6" fill="#fff"/><path d="M1408.3,117.2 C1405.6,115.6 1402.4,116.4 1401.6,120 L1399.4,130.4 C1398.8,133.4 1397.4,134.2 1395.4,133.8" fill="none" stroke="#fff" stroke-width="2.3" stroke-linecap="round"/><path d="M1398.4,123.6 H1406.4" stroke="#fff" stroke-width="2" stroke-linecap="round"/><path d="M1394,163.4 C1394,158.6 1409.3,158.6 1409.3,163.4 V176.6 C1409.3,181.2 1394,181.2 1394,176.6 Z" fill="#fff"/><ellipse cx="1401.65" cy="163.6" rx="5.4" ry="1.6" fill="#5c5e5c"/><g fill="none" stroke="#fff" stroke-width="1.6"><rect x="1398" y="205.4" width="8" height="5.4"/><rect x="1392.6" y="218.8" width="7.6" height="5.4"/><rect x="1403.8" y="218.8" width="7.6" height="5.4"/><path d="M1402,210.8 V214.6 M1396.4,218.8 V214.6 H1407.6 V218.8"/></g></svg>
<div class="a" style="left:0;top:697.6px;width:1424px;height:1.4px;background:#f6f8f9"></div>
</body></html>
